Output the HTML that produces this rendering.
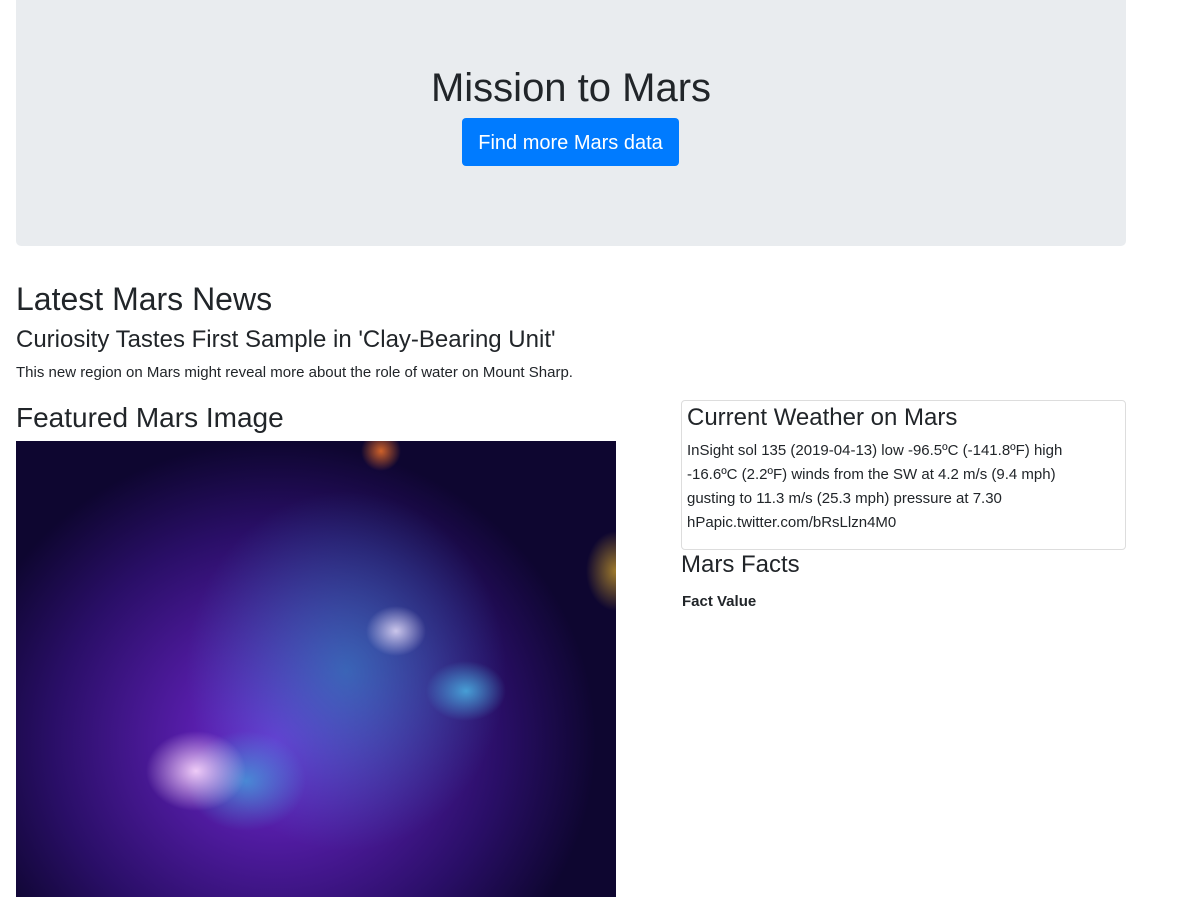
<!DOCTYPE html>
<html><head><meta charset="utf-8"><style>
body{margin:0;font-family:"Liberation Sans",sans-serif;color:#212529;background:#fff;width:1198px;height:897px;overflow:hidden;position:relative}
.jumbo{position:absolute;left:16px;top:0;width:1110px;height:246px;background:#e9ecef;border-radius:0 0 5px 5px}
.jumbo h1{position:absolute;left:0;right:0;top:66px;margin:0;text-align:center;font-size:40px;font-weight:500;line-height:44px}
.btn{position:absolute;left:446px;top:118px;width:217px;height:48px;background:#007bff;color:#fff;border-radius:4px;font-size:20px;line-height:50px;text-align:center}
.t{position:absolute;margin:0;font-weight:500;white-space:nowrap}
.img{position:absolute;left:16px;top:441px;width:600px;height:456px;background:
radial-gradient(ellipse 50px 40px at 180px 330px,rgba(255,220,255,.9),transparent),
radial-gradient(ellipse 30px 25px at 380px 190px,rgba(240,230,255,.8),transparent),
radial-gradient(ellipse 40px 30px at 450px 250px,rgba(80,210,250,.7),transparent),
radial-gradient(ellipse 60px 50px at 230px 340px,rgba(60,200,230,.6),transparent),
radial-gradient(ellipse 160px 180px at 330px 230px,rgba(40,160,200,.55),transparent),
radial-gradient(ellipse 320px 300px at 260px 300px,rgba(120,40,220,.95),rgba(60,20,140,.6) 70%,transparent),
radial-gradient(ellipse 20px 20px at 365px 10px,rgba(255,120,40,.8),transparent),
radial-gradient(ellipse 30px 40px at 600px 130px,rgba(255,200,40,.6),transparent),
#0e0630}
.box{position:absolute;left:681px;top:400px;width:443px;height:148px;border:1px solid #ddd;border-radius:4px}
</style></head><body>
<div class="jumbo"><h1>Mission to Mars</h1><div class="btn">Find more Mars data</div></div>
<h2 class="t" style="left:16px;top:281px;font-size:32px">Latest Mars News</h2>
<h4 class="t" style="left:16px;top:326px;font-size:24px">Curiosity Tastes First Sample in 'Clay-Bearing Unit'</h4>
<p class="t" style="left:16px;top:364px;font-size:15px;font-weight:400">This new region on Mars might reveal more about the role of water on Mount Sharp.</p>
<h3 class="t" style="left:16px;top:402px;font-size:28px">Featured Mars Image</h3>
<div class="img"></div>
<div class="box">
<div class="t" style="left:5px;top:3px;font-size:24px">Current Weather on Mars</div>
<div style="position:absolute;left:5px;top:38px;width:420px;font-size:15px;line-height:24px">InSight sol 135 (2019-04-13) low -96.5ºC (-141.8ºF) high -16.6ºC (2.2ºF) winds from the SW at 4.2 m/s (9.4 mph) gusting to 11.3 m/s (25.3 mph) pressure at 7.30 hPapic.twitter.com/bRsLlzn4M0</div>
</div>
<h3 class="t" style="left:681px;top:551px;font-size:24px">Mars Facts</h3>
<div class="t" style="left:682px;top:593px;font-size:15px;font-weight:700">Fact Value</div>
</body></html>
